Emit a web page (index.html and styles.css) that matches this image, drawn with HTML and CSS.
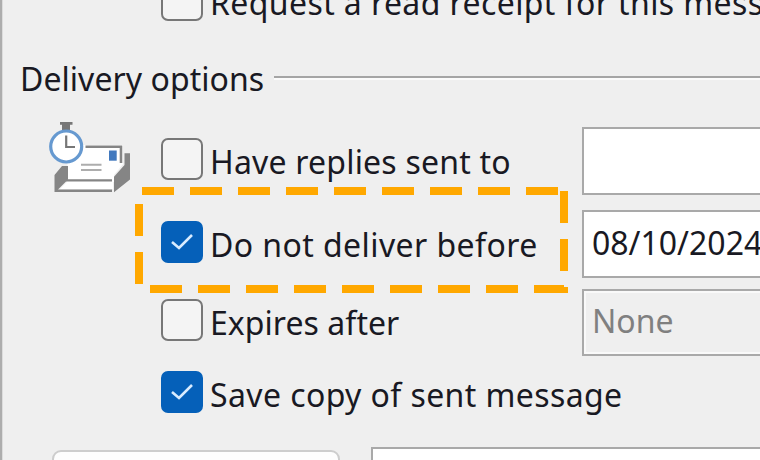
FILE: index.html
```html
<!DOCTYPE html>
<html lang="en">
<head>
<meta charset="utf-8">
<title>Message properties</title>
<link rel="stylesheet" href="styles.css">
</head>
<body>
<main class="dialog">
  <div class="row row-receipt">
    <span class="box"></span>
    <span class="label"><span class="t-receipt">Request a read receipt for this mess</span></span>
  </div>
  <div class="heading"><span class="t-heading">Delivery options</span><span class="rule"></span></div>
  <div class="row row-replies">
    <svg class="delivery-icon" width="84" height="74" viewBox="0 0 84 74">
      <path d="M20 23H75V42L66 53V60H19Z" fill="#fff"/>
      <path d="M37.500 24.700H73V41" fill="none" stroke="#858585" stroke-width="2.600"/>
      <path d="M6.500 53L14 44H20V57.500L10 67.500H64V70H6.500Z" fill="#858585"/>
      <path d="M20 59H65V67H12Z" fill="#fff"/>
      <path d="M18 58.300H64" stroke="#858585" stroke-width="2.300"/>
      <path d="M66 54.700L76.500 43V31.300H82V57.500L66 70.300Z" fill="#858585"/>
      <path d="M33 42.700H53.500M33 48H53.500" stroke="#adadad" stroke-width="2"/>
      <path d="M61 28.500H68.700V38.700H61Z" fill="#4279be"/>
      <path d="M12 0H24.500V2.700H22V9H14V2.700H12Z" fill="#777"/>
      <circle cx="18.200" cy="24.500" r="15.500" fill="#fff" stroke="#6699d0" stroke-width="3.200"/>
      <path d="M18.200 13.500V25H27" fill="none" stroke="#777" stroke-width="2.200"/>
    </svg>
    <span class="box"></span>
    <span class="label"><span class="t-replies">Have replies sent to</span></span>
    <span class="field"></span>
  </div>
  <div class="row row-defer">
    <span class="box checked"><svg width="24" height="18" viewBox="0 0 24 18"><path d="M2 9L9 15L22 2"/></svg></span>
    <span class="label"><span class="t-defer">Do not deliver before</span></span>
    <span class="field"><span class="t-date">08/10/2024</span></span>
  </div>
  <div class="row row-expires">
    <span class="box"></span>
    <span class="label"><span class="t-expires">Expires after</span></span>
    <span class="field disabled"><span class="t-none">None</span></span>
  </div>
  <div class="row row-save">
    <span class="box checked"><svg width="24" height="18" viewBox="0 0 24 18"><path d="M2 9L9 15L22 2"/></svg></span>
    <span class="label"><span class="t-save">Save copy of sent message</span></span>
  </div>
  <div class="footer"><span class="button"></span><span class="contacts"></span></div>
  <svg class="callout" width="760" height="460" viewBox="0 0 760 460"><path d="M564 191V289H139V191Z"/></svg>
</main>
</body>
</html>
```
FILE: styles.css
```css
* { box-sizing: border-box; }
body { margin: 0; overflow: hidden; }
.dialog {
  position: relative;
  width: 760px;
  height: 460px;
  overflow: hidden;
  display: flex;
  flex-direction: column;
  background: #efefef;
  box-shadow: inset 2px 0 #adadad, inset 3px 0 #dcdcdc;
  font-family: "Noto Sans", "Open Sans", sans-serif;
  font-size: 32px;
  line-height: 46px;
  color: #191923;
  white-space: nowrap;
}
.row {
  display: grid;
  grid-template-columns: 161px 50px 371px 200px;
  align-items: start;
  flex: none;
}
.row-receipt { height: 62px; margin-top: -21px; }
.row-replies { height: 83px; }
.row-defer { height: 78px; }
.row-expires { height: 72px; }
.row-save { height: 76px; }
.box {
  grid-column: 2;
  grid-row: 1;
  width: 42px;
  height: 42px;
  border: 2px solid #777;
  border-radius: 7px;
  background: #f4f4f4;
}
.checked {
  display: flex;
  align-items: center;
  justify-content: center;
  border-color: #0560b9;
  background: #0560b9;
}
.checked path { fill: none; stroke: #d9ecff; stroke-width: 2.6; }
.label { grid-column: 3; grid-row: 1; padding-top: 1px; margin-left: -1px; }
.t-receipt { letter-spacing: 0.4px; }
.t-replies { letter-spacing: 0.2px; }
.t-defer { letter-spacing: 0.42px; }
.t-expires { letter-spacing: 0.05px; }
.t-save { letter-spacing: 0.4px; }
.field {
  grid-column: 4;
  grid-row: 1;
  height: 68px;
  margin-top: -11px;
  padding: 8px 0 0 8px;
  border: 2px solid #a9a9a9;
  background: #fff;
}
.disabled {
  height: 67px;
  margin-top: -10px;
  padding-top: 7px;
  color: #808080;
  background: #efefef;
  box-shadow: inset 0 0 0 2px #f9f9f9;
}
.heading { display: flex; height: 97px; padding: 15px 0 0 20px; flex: none; }
.t-heading { letter-spacing: 0.05px; }
.rule { flex: 1; height: 4px; margin: 20px 0 0 10px; border-top: 2px solid #a5a5a5; border-bottom: 2px solid #fbfbfb; }
.delivery-icon { grid-column: 1; grid-row: 1; margin: -16px 0 0 48px; }
.footer { display: flex; gap: 31px; padding-left: 52px; margin-right: -4px; flex: none; }
.button { width: 288px; height: 60px; margin-top: 3px; border: 2px solid #cdcdcd; border-radius: 9px; background: #fdfdfd; }
.contacts { flex: 1; height: 60px; border: 2px solid #a9a9a9; background: #fff; }
.callout { position: absolute; inset: 0; }
.callout path { fill: none; stroke: #ffa800; stroke-width: 8; stroke-dasharray: 32 16; }
```
